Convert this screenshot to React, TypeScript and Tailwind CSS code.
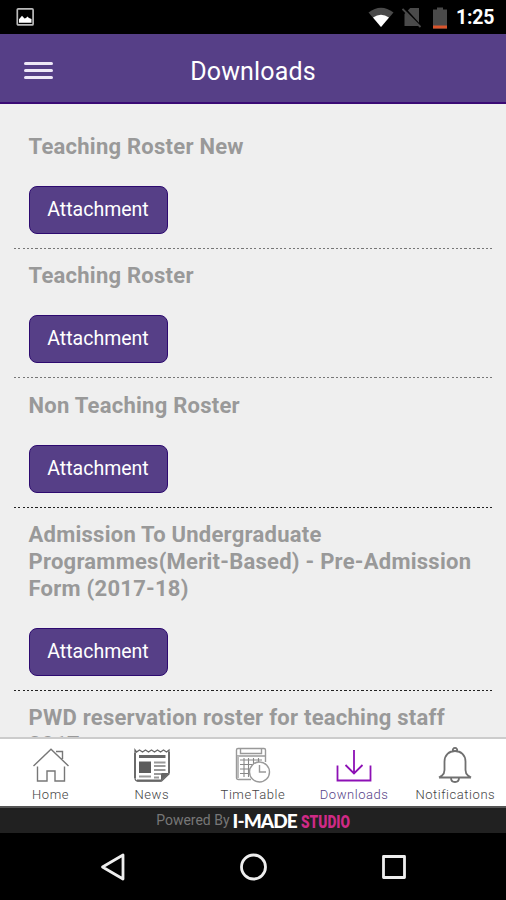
import type { ReactNode } from 'react';

const DOWNLOADS = [
  { title: 'Teaching Roster New', divider: 'text-[#777]' },
  { title: 'Teaching Roster', divider: 'text-[#777]' },
  { title: 'Non Teaching Roster', divider: 'text-[#222]' },
  { title: 'Admission To Undergraduate Programmes(Merit-Based) - Pre-Admission Form (2017-18)', divider: 'text-[#222]' },
  { title: 'PWD reservation roster for teaching staff 2017', divider: 'text-[#222]' },
];

function StatusBar() {
  return (
    <div className="flex h-[34px] shrink-0 items-center bg-black pl-4 pr-[11px] pt-px text-white">
      <svg width="19" height="19" viewBox="0 0 19 19" fill="none">
        <rect x="1.3" y="0.9" width="15.8" height="16" rx="1" stroke="#bbb" strokeWidth="1.7" />
        <path d="M3 14.8v-3.5l3-3.5 2.5 2.7 1.5-.5 1.5-1.5 1.5 1.5 2.5 1v3.8z" fill="#fff" />
      </svg>
      <svg className="ml-auto" width="26" height="22" viewBox="0 0 26 22">
        <path d="M0.5 5.5Q13-4 25.5 5.5L13 20z" fill="#4a4a4a" />
        <path d="M5 10.5Q13 5 21 10.5L13 20z" fill="#fff" />
      </svg>
      <svg className="ml-[8px]" width="20" height="22" viewBox="0 0 20 22">
        <path d="M8.2 1H17v18H2.5V7z" fill="#4a4a4a" />
        <path d="M1.5 0.2L19 19.5" stroke="#000" strokeWidth="2" />
        <path d="M0.5 2L18.5 20" stroke="#4a4a4a" strokeWidth="1.8" />
      </svg>
      <svg className="ml-[10px]" width="16" height="22" viewBox="0 0 16 22">
        <path d="M1 2.5h4V0.5h6v2h4v19H1z" fill="#4a4a4a" />
        <path d="M1 18.5h14v3H1z" fill="#d9542c" />
      </svg>
      <span className="ml-[8px] w-[39px] whitespace-nowrap pt-px text-[19.5px] font-bold leading-none tracking-[-0.2px]">1:25</span>
    </div>
  );
}

function Header() {
  return (
    <header className="grid h-[70px] shrink-0 grid-cols-[1fr_auto_1fr] items-center border-b-2 border-[#3a0a75] bg-[#563f87] px-6 text-white">
      <button className="flex w-[29px] flex-col gap-[4px] pt-[4px]" aria-label="Menu">
        <span className="h-[3px] rounded-full bg-[#eee8f7]" />
        <span className="h-[3px] rounded-full bg-[#eee8f7]" />
        <span className="h-[3px] rounded-full bg-[#eee8f7]" />
      </button>
      <h1 className="pt-[7px] text-[25px] leading-[30px] tracking-[0.15px]">Downloads</h1>
    </header>
  );
}

function DownloadItem({ title, divider }: { title: string; divider: string }) {
  return (
    <li className="pt-[14.6px]">
      <h2 className="ml-[14.5px] w-[455px] text-[22px] font-bold leading-[26.8px] tracking-[0.25px] text-[#999]">{title}</h2>
      <button className="mb-[14px] ml-[14.5px] mt-[25px] block h-[48px] w-[139px] rounded-[8px] border-[1.5px] border-[#2d0a70] bg-[#563f87] pb-px text-[19.5px] text-white">
        Attachment
      </button>
      <div className={`h-px bg-[repeating-linear-gradient(90deg,currentColor_0_2.2px,transparent_2.2px_4.29px)] ${divider}`} />
    </li>
  );
}

function Tab({ label, active, children }: { label: string; active?: boolean; children: ReactNode }) {
  return (
    <a className={`flex w-[101.2px] flex-col items-center pt-[7px] ${active ? 'text-[#563f87]' : 'text-[#444]'}`}>
      {children}
      <span className="mt-[3px] text-[13px] font-light leading-[16px] tracking-[0.55px]">{label}</span>
    </a>
  );
}

function HomeIcon() {
  return (
    <svg width="38" height="38" viewBox="0 0 38 38" fill="none" stroke="#777" strokeWidth="1.4">
      <path d="M1.5 20L19 3.2 36.5 20M24 5.5h6.5v7.5M5.5 20.5V35h9.5V25h8v10h9.5V20.5" />
    </svg>
  );
}

function NewsIcon() {
  return (
    <svg width="38" height="38" viewBox="0 0 38 38" fill="none" stroke="#666">
      <path d="M2 4l1.5 2 3-2 3 2 3-2 3 2 3-2 3 2 3-2 3 2 3-2 3 2 2.500-2v24l-7.500 7H5q-3 0-3-3z" strokeWidth="1.3" />
      <path d="M2 7v25M36 6v21M4 34.500h24" strokeWidth="1.8" />
      <path d="M6 10.500h26.500" strokeWidth="3" />
      <path d="M6 15.500h12v11.500H6z" fill="#5c5c5c" stroke="none" />
      <path d="M21 16.500h11.500M21 20h11.500M21 24h11.500M21 28h7M6 30.500h12M21 31.500h5" stroke="#999" strokeWidth="1.8" />
      <path d="M28.500 34v-6.500h7z" fill="#666" />
    </svg>
  );
}

function TimeTableIcon() {
  return (
    <svg width="38" height="38" viewBox="0 0 38 38" fill="none" stroke="#999" strokeWidth="1.4">
      <path d="M17 33.500H4.500q-2 0-2-2V4q0-1.500 1.500-1.500h26q1.500 0 1.500 1.500v12M2.500 10h29M6.500 3v4.500h21V3" />
      <path d="M4 10v22" stroke="#bbb" strokeWidth="2" />
      <path d="M6 14h22M6 18.500h15M6 23h10M6 27.500h9M10 12v19M14.500 12v19M19.500 12v6M24.500 12v4" stroke="#888" strokeWidth="1.1" />
      <circle cx="25.5" cy="26" r="10" fill="#fff" />
      <path d="M25.500 19v7h6.500" />
    </svg>
  );
}

function DownloadIcon() {
  return (
    <svg width="38" height="38" viewBox="0 0 38 38" fill="none" stroke="#8d10b5" strokeWidth="1.8">
      <path d="M19 4V28M10.500 19l8.500 8.500L27.500 19M2.500 19.500V34.500h33V19.500" />
    </svg>
  );
}

function BellIcon() {
  return (
    <svg width="38" height="38" viewBox="0 0 38 38" fill="none" stroke="#707070" strokeWidth="1.8">
      <path d="M17 5a2.200 2.200 0 1 1 4 0M3 31.500h32M6 29.500q2.500-2 2.500-5.500V15.500C8.500 9 13 5 19 5s10.500 4 10.500 10.500V24q0 3.500 2.500 5.500M3 31.500l3-2M35 31.500l-3-2M15 32q0 4 4 4t4-4" />
    </svg>
  );
}

export default function App() {
  return (
    <div className="flex h-[900px] w-[506px] flex-col overflow-hidden bg-[#efefef] font-[Roboto,sans-serif]">
      <StatusBar />
      <Header />
      <main className="min-h-0 flex-1 overflow-hidden pl-[14px] pr-[13px] pt-[15.5px]">
        <ul>
          {DOWNLOADS.map((item) => (
            <DownloadItem key={item.title} {...item} />
          ))}
        </ul>
      </main>

      <nav className="flex h-[69px] shrink-0 border-t-2 border-[#ccc] bg-white">
        <Tab label="Home"><HomeIcon /></Tab>
        <Tab label="News"><NewsIcon /></Tab>
        <Tab label="TimeTable"><TimeTableIcon /></Tab>
        <Tab label="Downloads" active><DownloadIcon /></Tab>
        <Tab label="Notifications"><BellIcon /></Tab>
      </nav>

      <footer className="flex h-[27px] shrink-0 items-center justify-center whitespace-nowrap border-t-2 border-[#555] bg-[#212121] pl-px">
        <span className="text-[14px] text-[#777]">Powered By</span>
        <span className="ml-[3px] font-[Lato,sans-serif] text-[19px] font-black leading-none tracking-[-0.9px] text-white">I-MADE</span>
        <svg className="ml-1" width="50" height="20" viewBox="0 0 50 20">
          <text x="0" y="16.5" textLength="49" lengthAdjust="spacingAndGlyphs" fill="#cf2a86" fontFamily="Roboto, sans-serif" fontWeight="900" fontSize="19">STUDIO</text>
        </svg>
      </footer>

      {/* Android soft keys */}
      <div className="flex h-[67px] shrink-0 items-center justify-between bg-black px-[99px]">
        <svg width="28" height="30" viewBox="0 0 28 30" fill="none" stroke="#eee" strokeWidth="2.8" strokeLinejoin="round">
          <path d="M3.500 15L24 3v24z" />
        </svg>
        <svg width="30" height="30" viewBox="0 0 30 30" fill="none" stroke="#eee" strokeWidth="2.8">
          <circle cx="14.5" cy="15" r="12" />
        </svg>
        <svg width="26" height="26" viewBox="0 0 26 26" fill="none" stroke="#eee" strokeWidth="2.8" strokeLinejoin="round">
          <rect x="2.5" y="2.5" width="21" height="21" />
        </svg>
      </div>
    </div>
  );
}
